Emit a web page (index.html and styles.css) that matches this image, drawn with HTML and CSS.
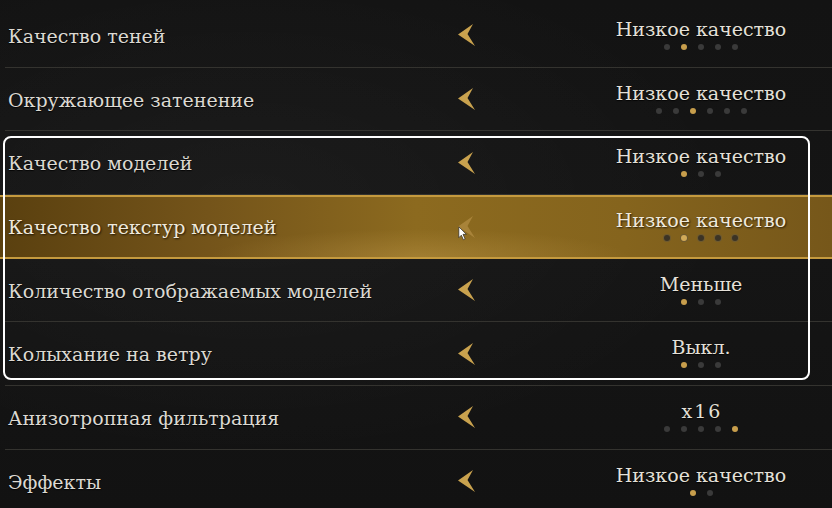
FILE: index.html
```html
<!DOCTYPE html>
<html lang="ru">
<head>
<meta charset="utf-8">
<title>Настройки графики</title>
<link rel="stylesheet" href="styles.css">
</head>
<body>
<div class="screen">
  <div class="list">
    <div class="row">
      <span class="label">Качество теней</span>
      <span class="arrow"><svg viewBox="0 0 20 24"><path d="M1 11.5 L16 1 L10.5 11 L18 23 Z"/></svg></span>
      <span class="gap"></span>
      <div class="value"><span class="vtext">Низкое качество</span><div class="dots"><i></i><i class="on"></i><i></i><i></i><i></i></div></div>
    </div>
    <div class="row">
      <span class="label">Окружающее затенение</span>
      <span class="arrow"><svg viewBox="0 0 20 24"><path d="M1 11.5 L16 1 L10.5 11 L18 23 Z"/></svg></span>
      <span class="gap"></span>
      <div class="value"><span class="vtext">Низкое качество</span><div class="dots"><i></i><i></i><i class="on"></i><i></i><i></i><i></i></div></div>
    </div>
    <div class="row">
      <span class="label">Качество моделей</span>
      <span class="arrow"><svg viewBox="0 0 20 24"><path d="M1 11.5 L16 1 L10.5 11 L18 23 Z"/></svg></span>
      <span class="gap"></span>
      <div class="value"><span class="vtext">Низкое качество</span><div class="dots"><i class="on"></i><i></i><i></i></div></div>
    </div>
    <div class="row active">
      <span class="label">Качество текстур моделей</span>
      <span class="arrow"><svg viewBox="0 0 20 24"><path d="M1 11.5 L16 1 L10.5 11 L18 23 Z"/></svg></span>
      <span class="gap"></span>
      <div class="value"><span class="vtext">Низкое качество</span><div class="dots"><i></i><i class="on"></i><i></i><i></i><i></i></div></div>
    </div>
    <div class="row">
      <span class="label">Количество отображаемых моделей</span>
      <span class="arrow"><svg viewBox="0 0 20 24"><path d="M1 11.5 L16 1 L10.5 11 L18 23 Z"/></svg></span>
      <span class="gap"></span>
      <div class="value"><span class="vtext">Меньше</span><div class="dots"><i class="on"></i><i></i><i></i></div></div>
    </div>
    <div class="row">
      <span class="label">Колыхание на ветру</span>
      <span class="arrow"><svg viewBox="0 0 20 24"><path d="M1 11.5 L16 1 L10.5 11 L18 23 Z"/></svg></span>
      <span class="gap"></span>
      <div class="value"><span class="vtext">Выкл.</span><div class="dots"><i class="on"></i><i></i><i></i></div></div>
    </div>
    <div class="row">
      <span class="label">Анизотропная фильтрация</span>
      <span class="arrow"><svg viewBox="0 0 20 24"><path d="M1 11.5 L16 1 L10.5 11 L18 23 Z"/></svg></span>
      <span class="gap"></span>
      <div class="value"><span class="vtext spaced">x16</span><div class="dots"><i></i><i></i><i></i><i></i><i class="on"></i></div></div>
    </div>
    <div class="row">
      <span class="label">Эффекты</span>
      <span class="arrow"><svg viewBox="0 0 20 24"><path d="M1 11.5 L16 1 L10.5 11 L18 23 Z"/></svg></span>
      <span class="gap"></span>
      <div class="value"><span class="vtext">Низкое качество</span><div class="dots"><i class="on"></i><i></i></div></div>
    </div>
  </div>
  <div class="focus-frame"></div>
  <svg class="cursor" viewBox="0 0 12 18"><path d="M1 1 L1 14 L4 11 L6.5 16.5 L8.5 15.5 L6 10 L10 10 Z"/></svg>
</div>
</body>
</html>
```
FILE: styles.css
```css
html, body {
  margin: 0;
  padding: 0;
  background: #131313;
}
.screen {
  position: relative;
  width: 832px;
  height: 508px;
  overflow: hidden;
  background:
    radial-gradient(ellipse at 30% 40%, rgba(255,255,255,0.03), transparent 60%),
    linear-gradient(180deg, #131313 0%, #151515 50%, #121212 100%);
  font-family: "DejaVu Serif", "Liberation Serif", serif;
}
.list {
  display: flex;
  flex-direction: column;
  padding-top: 4px;
}
.row {
  display: grid;
  grid-template-columns: 445px 34px 1fr 200px 31px;
  align-items: center;
  height: 63.7px;
  box-sizing: border-box;
  border-bottom: 1px solid #34332f;
  margin-left: 5px;
}
.label {
  padding-left: 3px;
  color: #dcd9d2;
  font-size: 19px;
  padding-top: 1px;
  text-shadow: 0 1px 1px rgba(0,0,0,0.8);
}
.arrow {
  display: flex;
  justify-content: center;
  align-items: center;
}
.arrow svg {
  width: 20px;
  height: 24px;
  fill: #c9a24e;
}
.value {
  display: flex;
  flex-direction: column;
  align-items: center;
  align-self: start;
  margin-top: 13px;
}
.vtext {
  color: #e4e0d8;
  font-size: 19px;
  line-height: 24px;
  text-shadow: 0 1px 1px rgba(0,0,0,0.8);
}
.vtext.spaced {
  letter-spacing: 2px;
  padding-left: 2px;
}
.dots {
  display: flex;
  gap: 11px;
  margin-top: 3px;
}
.dots i {
  width: 6px;
  height: 6px;
  border-radius: 50%;
  background: #3a3a3a;
}
.dots i.on {
  background: #c79e4c;
}
.row.active {
  margin-left: 0;
  padding-left: 5px;
  border-top: 2px solid #c59a3e;
  border-bottom: 2px solid #c59a3e;
  background:
    radial-gradient(ellipse 300px 40px at 420px 60px, rgba(210,170,90,0.3), transparent 70%),
    linear-gradient(90deg, #5a400f 0%, #74541a 25%, #8c6a1f 50%, #85641d 75%, #76571a 100%);
}
.row.active .value {
  margin-top: 11px;
}
.row.active .label,
.row.active .vtext {
  color: #efe9dc;
  text-shadow: 1px 1px 2px rgba(0,0,0,0.7);
}
.row.active .arrow svg {
  fill: #b08a40;
  opacity: 0.8;
}
.row.active .dots i {
  background: #3b3325;
  box-shadow: 0 0 0 1px #6e5a30;
}
.row.active .dots i.on {
  background: #d2aa58;
  box-shadow: 0 0 0 1px #6e5a30;
}
.focus-frame {
  position: absolute;
  left: 3px;
  top: 136px;
  width: 803px;
  height: 240px;
  border: 2px solid #ffffff;
  border-radius: 8px;
  pointer-events: none;
}
.cursor {
  position: absolute;
  left: 458px;
  top: 226px;
  width: 10px;
  height: 15px;
  fill: #ffffff;
  stroke: #222;
  stroke-width: 0.8;
}
```
